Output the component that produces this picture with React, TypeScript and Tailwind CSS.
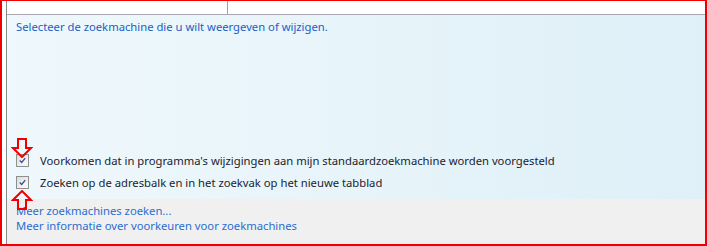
import React from "react";

function Check() {
  return (
    <div className="w-[13px] h-[13px] border border-[#8e8f8f] bg-gradient-to-br from-[#dcdcdc] to-[#fbfbfb] p-[2px] flex items-center justify-center shrink-0">
      <div className="w-full h-full bg-gradient-to-br from-[#e2e2e6] to-[#fafafa] flex items-center justify-center">
        <svg width="9" height="9" viewBox="0 0 9 9">
          <path d="M1 4.5 L3.5 7 L8 1.5" fill="none" stroke="#3c4f94" strokeWidth="1.7" />
        </svg>
      </div>
    </div>
  );
}

function DownArrow() {
  return (
    <svg width="22" height="20" viewBox="0 0 22 20">
      <path d="M7 1 L15 1 L15 10 L20 10 L11 19 L2 10 L7 10 Z" fill="none" stroke="#f00000" strokeWidth="2" strokeLinejoin="miter" />
    </svg>
  );
}

function UpArrow() {
  return (
    <svg width="22" height="20" viewBox="0 0 22 20">
      <path d="M7 19 L15 19 L15 10 L20 10 L11 1 L2 10 L7 10 Z" fill="none" stroke="#f00000" strokeWidth="2" strokeLinejoin="miter" />
    </svg>
  );
}

export default function App() {
  const font = { fontFamily: '"Noto Sans", "Open Sans", sans-serif' };
  return (
    <div
      className="relative w-[707px] h-[246px] border-l-2 border-t border-r-2 border-b-2 border-[#f00000] bg-white flex text-[11.25px]"
      style={font}
    >
      <div className="w-[5px] bg-white border-r border-[#8a8a8a]" />
      <div className="flex-1 flex flex-col">
        <div className="h-[14px] flex border-b border-[#a8a8b0] bg-white">
          <div className="w-[221px] border-r border-[#a0a0a0]" />
          <div className="flex-1" />
        </div>
        <div className="h-[184px] bg-gradient-to-r from-[#eff8fc] to-[#dff0f8] flex flex-col pl-[9px] pt-[4px]">
          <div className="text-[#2060c4] leading-[16px]">Selecteer de zoekmachine die u wilt weergeven of wijzigen.</div>
          <div className="mt-auto pb-[10px] flex flex-col gap-[9px] text-[#1c1c30]">
            <div className="flex items-center gap-[11px] h-[13px]">
              <Check />
              <span className="leading-[13px]">Voorkomen dat in programma's wijzigingen aan mijn standaardzoekmachine worden voorgesteld</span>
            </div>
            <div className="flex items-center gap-[11px] h-[13px]">
              <Check />
              <span className="leading-[13px]">Zoeken op de adresbalk en in het zoekvak op het nieuwe tabblad</span>
            </div>
          </div>
        </div>
        <div className="flex-1 bg-[#f0f0f0] pl-[9px] pt-[4px] flex flex-col text-[#2a6ed0] leading-[15px]">
          <div>Meer zoekmachines zoeken...</div>
          <div>Meer informatie over voorkeuren voor zoekmachines</div>
        </div>
      </div>
      <div className="absolute left-[9px] top-[137px]">
        <DownArrow />
      </div>
      <div className="absolute left-[9px] top-[189px]">
        <UpArrow />
      </div>
    </div>
  );
}
